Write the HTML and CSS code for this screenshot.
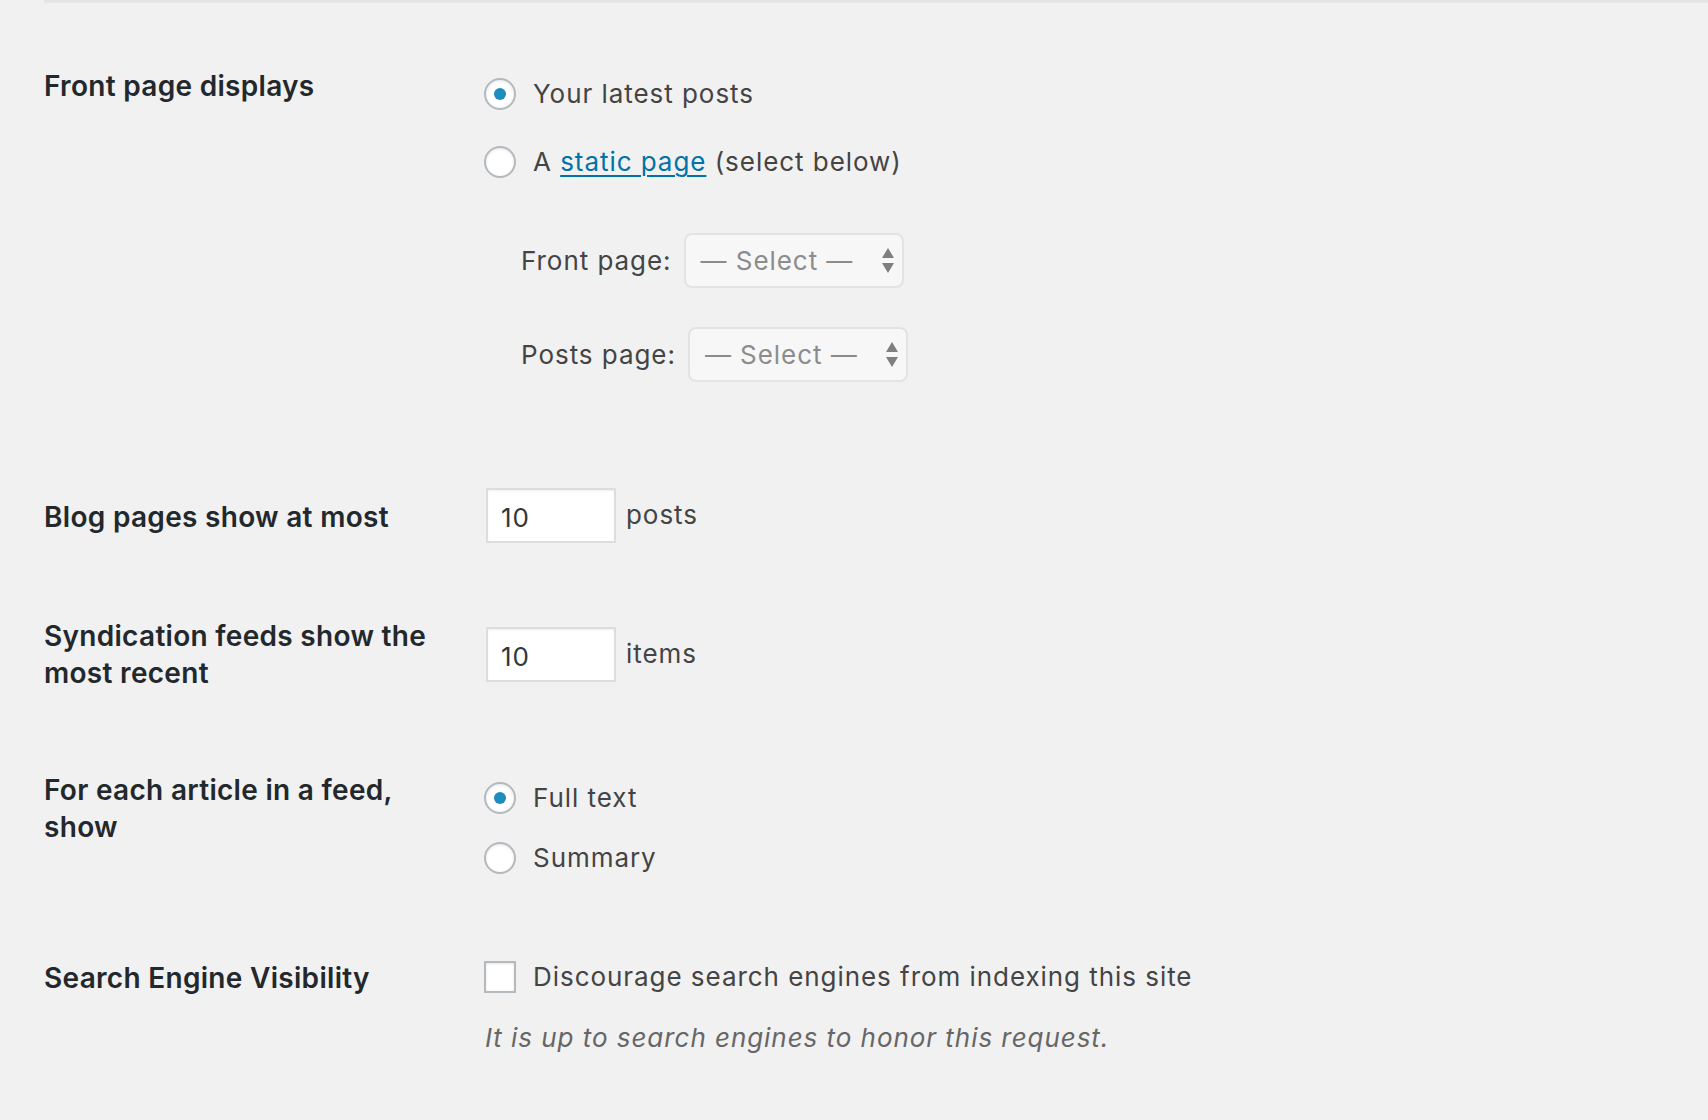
FILE: index.html
```html
<!DOCTYPE html>
<html lang="en">
<head>
<meta charset="utf-8">
<title>Reading Settings</title>
<link rel="stylesheet" href="styles.css">
</head>
<body>
<div class="topline"></div>
<div class="form">
  <div class="row row-front">
    <div class="th">Front page displays</div>
    <div class="td">
      <label class="opt"><span class="radio is-checked"></span><span>Your latest posts</span></label>
      <label class="opt opt-second"><span class="radio"></span><span>A <a class="link" href="#">static page</a> (select below)</span></label>
      <div class="pick pick-front">
        <span class="pick-label">Front page:</span>
        <span class="select"><span>— Select —</span><svg class="arrows" width="12" height="26" viewBox="0 0 12 26"><polygon points="6,0 12,10 0,10" fill="#7f7f7f"/><polygon points="0,15 12,15 6,25" fill="#7f7f7f"/></svg></span>
      </div>
      <div class="pick pick-posts">
        <span class="pick-label">Posts page:</span>
        <span class="select"><span>— Select —</span><svg class="arrows" width="12" height="26" viewBox="0 0 12 26"><polygon points="6,0 12,10 0,10" fill="#7f7f7f"/><polygon points="0,15 12,15 6,25" fill="#7f7f7f"/></svg></span>
      </div>
    </div>
  </div>

  <div class="row row-blog">
    <div class="th">Blog pages show at most</div>
    <div class="td inline">
      <span class="num">10</span><span class="unit">posts</span>
    </div>
  </div>

  <div class="row row-feeds">
    <div class="th">Syndication feeds show the most recent</div>
    <div class="td inline">
      <span class="num">10</span><span class="unit">items</span>
    </div>
  </div>

  <div class="row row-article">
    <div class="th">For each article in a feed, show</div>
    <div class="td">
      <label class="opt"><span class="radio is-checked"></span><span>Full text</span></label>
      <label class="opt opt-tight"><span class="radio"></span><span>Summary</span></label>
    </div>
  </div>

  <div class="row row-search">
    <div class="th">Search Engine Visibility</div>
    <div class="td">
      <label class="opt"><span class="checkbox"></span><span>Discourage search engines from indexing this site</span></label>
      <p class="desc">It is up to search engines to honor this request.</p>
    </div>
  </div>
</div>
</body>
</html>
```

FILE: styles.css
```css
* { box-sizing: border-box; }

html, body {
  margin: 0;
  padding: 0;
  background: #f1f1f1;
}

body {
  font-family: Inter, "Noto Sans", "Liberation Sans", sans-serif;
  color: #444;
  font-size: 26px;
  line-height: 36px;
  letter-spacing: 0.95px;
  width: 1708px;
  height: 1120px;
  overflow: hidden;
}

.topline {
  height: 2px;
  margin-left: 44px;
  background: #e4e4e4;
  box-shadow: 0 1px 2px rgba(0, 0, 0, 0.05);
}

.form {
  padding-left: 44px;
}

.row {
  display: grid;
  grid-template-columns: 440px 1fr;
  align-items: start;
}

.th {
  font-size: 28px;
  line-height: 37px;
  font-weight: 600;
  letter-spacing: 0.3px;
  color: #23282d;
  padding-right: 40px;
}

.td {
  display: flex;
  flex-direction: column;
  align-items: flex-start;
}

/* row 1 */
.row-front .th { padding-top: 66px; }
.row-front .td { padding-top: 74px; padding-bottom: 76px; }

/* row 2 */
.row-blog .th { padding-top: 41px; }
.row-blog .td { padding-top: 30px; padding-bottom: 30px; }

/* row 3 */
.row-feeds .th { padding-top: 45px; padding-bottom: 39px; }
.row-feeds .td { padding-top: 54px; }

/* row 4 */
.row-article .th { padding-top: 41px; }
.row-article .td { padding-top: 49px; padding-bottom: 42px; }

/* row 5 */
.row-search .th { padding-top: 42px; }
.row-search .td { padding-top: 41px; }

.opt {
  display: flex;
  align-items: center;
  height: 36px;
  color: #444;
}

.opt-second { margin-top: 32px; }
.opt-tight { margin-top: 24px; }

.radio {
  width: 32px;
  height: 32px;
  border: 2px solid #b4b9be;
  border-radius: 50%;
  background: #fff;
  box-shadow: inset 0 1px 3px rgba(0, 0, 0, 0.1);
  margin-right: 17px;
  display: flex;
  align-items: center;
  justify-content: center;
  flex: none;
}

.radio.is-checked::before {
  content: "";
  width: 12px;
  height: 12px;
  border-radius: 50%;
  background: #1e8cbe;
}

.checkbox {
  width: 32px;
  height: 32px;
  border: 2px solid #b4b9be;
  background: #fff;
  box-shadow: inset 0 1px 3px rgba(0, 0, 0, 0.1);
  margin-right: 17px;
  flex: none;
}

.link {
  color: #0073aa;
  text-decoration: underline;
  text-underline-offset: 4px;
  text-decoration-thickness: 2px;
}

.pick {
  display: flex;
  align-items: center;
  margin-left: 37px;
}

.pick-front { margin-top: 53px; }
.pick-posts { margin-top: 39px; }

.pick-label {
  margin-right: 12px;
  color: #444;
}

.select {
  display: flex;
  align-items: center;
  width: 220px;
  height: 55px;
  padding-left: 15px;
  border: 2px solid #e3e3e3;
  border-radius: 8px;
  background: #f7f7f7;
  color: #8c8c8c;
}

.arrows {
  margin-left: auto;
  margin-right: 8px;
  flex: none;
}

.inline {
  flex-direction: row;
  align-items: center;
}

.num {
  display: flex;
  align-items: center;
  width: 130px;
  height: 55px;
  margin-left: 2px;
  padding: 4px 0 0 13px;
  border: 2px solid #dddddd;
  background: #fff;
  box-shadow: inset 0 1px 2px rgba(0, 0, 0, 0.07);
  color: #32373c;
}

.unit {
  margin-left: 10px;
  margin-top: -2px;
  color: #444;
}

.desc {
  margin: 25px 0 0 1px;
  font-style: italic;
  color: #666;
}
```
